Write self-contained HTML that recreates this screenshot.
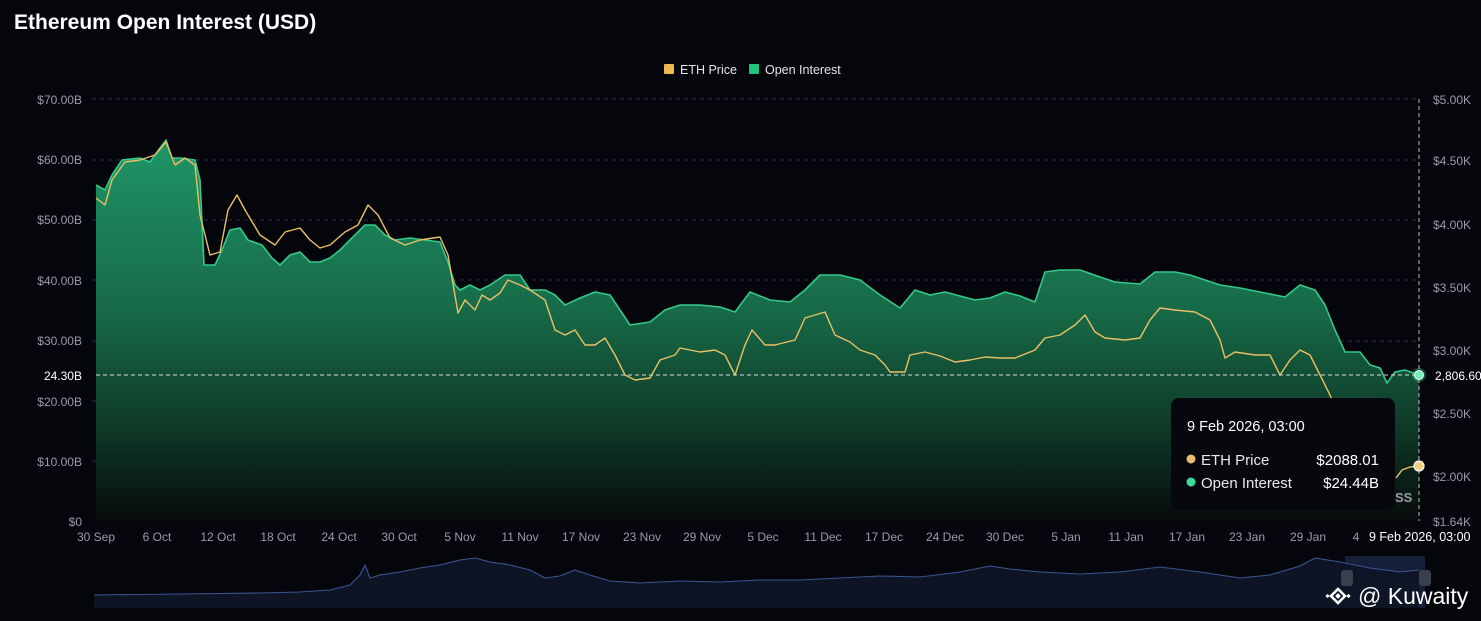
<!DOCTYPE html>
<html><head><meta charset="utf-8"><style>
html,body{margin:0;padding:0;background:#05060c;width:1481px;height:621px;overflow:hidden}
svg{display:block;font-family:"Liberation Sans",Arial,sans-serif}
</style></head><body>
<svg width="1481" height="621" viewBox="0 0 1481 621">
<defs>
<linearGradient id="g" x1="0" y1="0" x2="0" y2="1" gradientUnits="userSpaceOnUse">
<stop offset="0" stop-color="#1f9a66" stop-opacity="1" y="140"/>
<stop offset="0.15" stop-color="#1c8d5e"/>
<stop offset="0.55" stop-color="#145a3c"/>
<stop offset="1" stop-color="#05090a"/>
</linearGradient>
<linearGradient id="ga" x1="0" y1="140" x2="0" y2="521" gradientUnits="userSpaceOnUse">
<stop offset="0" stop-color="#1f9566"/>
<stop offset="0.45" stop-color="#176a47"/>
<stop offset="0.75" stop-color="#0f3a28"/>
<stop offset="1" stop-color="#060b0b"/>
</linearGradient>
</defs>
<rect width="1481" height="621" fill="#05060c"/>
<text x="14" y="29" fill="#fff" font-size="21" font-weight="700">Ethereum Open Interest (USD)</text>
<rect x="664" y="64" width="10" height="10" rx="1" fill="#ecb94e"/>
<text x="680" y="74" fill="#e6e6e6" font-size="12.5">ETH Price</text>
<rect x="749" y="64" width="10" height="10" rx="1" fill="#1fc47f"/>
<text x="765" y="74" fill="#e6e6e6" font-size="12.5">Open Interest</text>
<g stroke="#2a2d36" stroke-dasharray="4 4" stroke-width="1">
<line x1="92" y1="99" x2="1419" y2="99"/><line x1="92" y1="160" x2="1419" y2="160"/><line x1="92" y1="220" x2="1419" y2="220"/><line x1="92" y1="280" x2="1419" y2="280"/><line x1="92" y1="341" x2="1419" y2="341"/><line x1="92" y1="401" x2="1419" y2="401"/><line x1="92" y1="461" x2="1419" y2="461"/>
</g>
<g fill="#9a9ca4" font-size="12" text-anchor="end">
<text x="82" y="104">$70.00B</text><text x="82" y="164">$60.00B</text><text x="82" y="224">$50.00B</text><text x="82" y="285">$40.00B</text><text x="82" y="345">$30.00B</text><text x="82" y="406">$20.00B</text><text x="82" y="466">$10.00B</text><text x="82" y="526">$0</text>
</g>
<g fill="#9a9ca4" font-size="12">
<text x="1433" y="104">$5.00K</text><text x="1433" y="165">$4.50K</text><text x="1433" y="229">$4.00K</text><text x="1433" y="292">$3.50K</text><text x="1433" y="355">$3.00K</text><text x="1433" y="418">$2.50K</text><text x="1433" y="481">$2.00K</text><text x="1433" y="526">$1.64K</text>
</g>
<path fill="url(#ga)" d="M96,185 L105,190 112,175 122,160 140,158 150,162 160,148 166,140 172,158 180,158 195,160 200,180 204,265 215,265 222,250 230,230 240,228 248,240 262,245 272,258 280,265 290,255 300,252 310,262 320,262 330,258 340,250 355,235 365,225 375,225 385,235 395,240 410,238 425,240 440,242 448,262 455,285 460,290 470,285 480,290 490,285 505,275 520,275 530,290 545,290 555,295 565,305 580,298 595,292 610,295 620,310 630,325 650,322 665,310 680,305 700,305 720,307 735,312 750,292 770,300 790,302 805,290 820,275 840,275 860,280 880,295 900,308 915,290 930,295 945,292 960,296 975,300 990,298 1005,292 1020,296 1035,302 1045,272 1060,270 1080,270 1100,277 1115,282 1140,284 1155,272 1175,272 1190,275 1205,280 1220,285 1240,288 1260,292 1285,297 1300,285 1315,290 1325,305 1335,330 1345,352 1360,352 1370,365 1380,368 1387,383 1395,372 1405,370 1419,375 L1419,521 L96,521 Z"/>
<polyline fill="none" stroke="#34c98a" stroke-width="1.6" stroke-linejoin="round" points="96,185 105,190 112,175 122,160 140,158 150,162 160,148 166,140 172,158 180,158 195,160 200,180 204,265 215,265 222,250 230,230 240,228 248,240 262,245 272,258 280,265 290,255 300,252 310,262 320,262 330,258 340,250 355,235 365,225 375,225 385,235 395,240 410,238 425,240 440,242 448,262 455,285 460,290 470,285 480,290 490,285 505,275 520,275 530,290 545,290 555,295 565,305 580,298 595,292 610,295 620,310 630,325 650,322 665,310 680,305 700,305 720,307 735,312 750,292 770,300 790,302 805,290 820,275 840,275 860,280 880,295 900,308 915,290 930,295 945,292 960,296 975,300 990,298 1005,292 1020,296 1035,302 1045,272 1060,270 1080,270 1100,277 1115,282 1140,284 1155,272 1175,272 1190,275 1205,280 1220,285 1240,288 1260,292 1285,297 1300,285 1315,290 1325,305 1335,330 1345,352 1360,352 1370,365 1380,368 1387,383 1395,372 1405,370 1419,375"/>
<polyline fill="none" stroke="#e9c065" stroke-width="1.4" stroke-linejoin="round" points="96,198 105,205 112,180 125,162 140,160 155,155 166,142 175,165 185,158 195,165 200,215 210,255 220,252 228,210 237,195 245,210 260,235 275,245 285,232 300,228 310,240 320,248 330,245 345,232 358,225 368,205 378,215 390,238 405,245 420,240 440,237 448,255 458,313 465,300 475,310 482,295 490,300 500,293 508,280 520,285 530,290 545,300 555,330 565,335 575,330 585,345 595,345 605,338 615,355 625,375 635,380 650,378 660,360 675,355 680,348 700,352 715,350 725,355 735,375 745,345 752,330 765,345 775,345 795,340 805,318 825,312 835,335 850,342 860,350 875,355 885,365 890,372 905,372 910,355 925,352 940,356 955,362 970,360 985,357 1000,358 1015,358 1035,350 1045,338 1060,335 1075,325 1085,315 1095,332 1105,338 1125,340 1140,338 1150,320 1160,308 1175,310 1195,312 1210,320 1220,340 1225,358 1235,352 1255,355 1270,355 1280,375 1290,360 1300,350 1310,355 1320,375 1330,395 1340,420"/>
<polyline fill="none" stroke="#e9c065" stroke-width="1.4" points="1396,478 1402,470 1410,467 1419,466"/>
<line x1="96" y1="375" x2="1419" y2="375" stroke="#d8d8d8" stroke-dasharray="4 3" stroke-width="1"/>
<line x1="1419" y1="99" x2="1419" y2="521" stroke="#bbb" stroke-dasharray="4 3" stroke-width="1"/>
<rect x="36" y="367" width="50" height="17" fill="#05060c"/>
<text x="82" y="380" fill="#fff" font-size="12" text-anchor="end">24.30B</text>
<rect x="1428" y="367" width="53" height="17" fill="#05060c"/>
<text x="1435" y="380" fill="#fff" font-size="12">2,806.60</text>
<circle cx="1419" cy="375" r="7" fill="#2ad08a" opacity="0.35"/>
<circle cx="1419" cy="375" r="4.5" fill="#6ff0b8" stroke="#fff" stroke-width="1"/>
<circle cx="1419" cy="466" r="5" fill="#f3d083" stroke="#fff" stroke-width="1.2"/>
<rect x="1171" y="398" width="224" height="112" rx="8" fill="#07080d"/>
<text x="1187" y="431" fill="#fff" font-size="14.5">9 Feb 2026, 03:00</text>
<circle cx="1191" cy="459" r="4.5" fill="#e7bf6a"/>
<text x="1201" y="465" fill="#e8e8e8" font-size="15">ETH Price</text>
<text x="1379" y="465" fill="#fff" font-size="15" text-anchor="end">$2088.01</text>
<circle cx="1191" cy="482" r="4.5" fill="#3fd99a"/>
<text x="1201" y="488" fill="#e8e8e8" font-size="15">Open Interest</text>
<text x="1379" y="488" fill="#fff" font-size="15" text-anchor="end">$24.44B</text>
<text x="1395" y="502" fill="#9a9ca4" font-size="13" font-weight="700">SS</text>
<g fill="#9a9ca4" font-size="12" text-anchor="middle">
<text x="96" y="541">30 Sep</text><text x="157" y="541">6 Oct</text><text x="218" y="541">12 Oct</text><text x="278" y="541">18 Oct</text><text x="339" y="541">24 Oct</text><text x="399" y="541">30 Oct</text><text x="460" y="541">5 Nov</text><text x="520" y="541">11 Nov</text><text x="581" y="541">17 Nov</text><text x="642" y="541">23 Nov</text><text x="702" y="541">29 Nov</text><text x="763" y="541">5 Dec</text><text x="823" y="541">11 Dec</text><text x="884" y="541">17 Dec</text><text x="945" y="541">24 Dec</text><text x="1005" y="541">30 Dec</text><text x="1066" y="541">5 Jan</text><text x="1126" y="541">11 Jan</text><text x="1187" y="541">17 Jan</text><text x="1247" y="541">23 Jan</text><text x="1308" y="541">29 Jan</text><text x="1356" y="541">4</text>
</g>
<rect x="1363" y="527" width="118" height="20" fill="#05060c"/>
<text x="1369" y="541" fill="#fff" font-size="12.5">9 Feb 2026, 03:00</text>
<rect x="1345" y="556" width="80" height="52" fill="#1a2545" opacity="0.8"/>
<path fill="#0e1526" d="M94,595 L180,594 260,593 300,592 330,590 350,585 360,575 365,565 370,578 380,575 400,572 420,568 440,565 460,560 475,558 490,562 510,565 530,570 545,578 560,576 575,570 590,575 610,581 640,583 680,581 720,582 760,580 800,580 840,578 880,576 920,577 960,572 990,566 1010,569 1040,572 1080,574 1120,572 1160,567 1200,572 1240,578 1270,575 1300,566 1315,558 1340,562 1370,568 1400,572 1419,570 L1419,608 L94,608 Z" opacity="0.95"/>
<polyline fill="none" stroke="#3a5590" stroke-width="1.1" points="94,595 180,594 260,593 300,592 330,590 350,585 360,575 365,565 370,578 380,575 400,572 420,568 440,565 460,560 475,558 490,562 510,565 530,570 545,578 560,576 575,570 590,575 610,581 640,583 680,581 720,582 760,580 800,580 840,578 880,576 920,577 960,572 990,566 1010,569 1040,572 1080,574 1120,572 1160,567 1200,572 1240,578 1270,575 1300,566 1315,558 1340,562 1370,568 1400,572 1419,570"/>
<rect x="1341" y="570" width="12" height="16" rx="3" fill="#3a3f4c"/>
<rect x="1419" y="570" width="12" height="16" rx="3" fill="#3a3f4c"/>
<g transform="translate(1338,596)" fill="#fff">
<rect x="-5" y="-5" width="10" height="10" transform="rotate(45)" fill="none" stroke="#fff" stroke-width="2.5"/>
<rect x="-2" y="-2" width="4" height="4" transform="rotate(45)"/>
<rect x="-12" y="-1.5" width="3" height="3" transform="rotate(45 -10.5 0)"/>
<rect x="9" y="-1.5" width="3" height="3" transform="rotate(45 10.5 0)"/>
</g>
<text x="1358" y="604" fill="#fff" font-size="23">@ Kuwaity</text>
</svg>
</body></html>
